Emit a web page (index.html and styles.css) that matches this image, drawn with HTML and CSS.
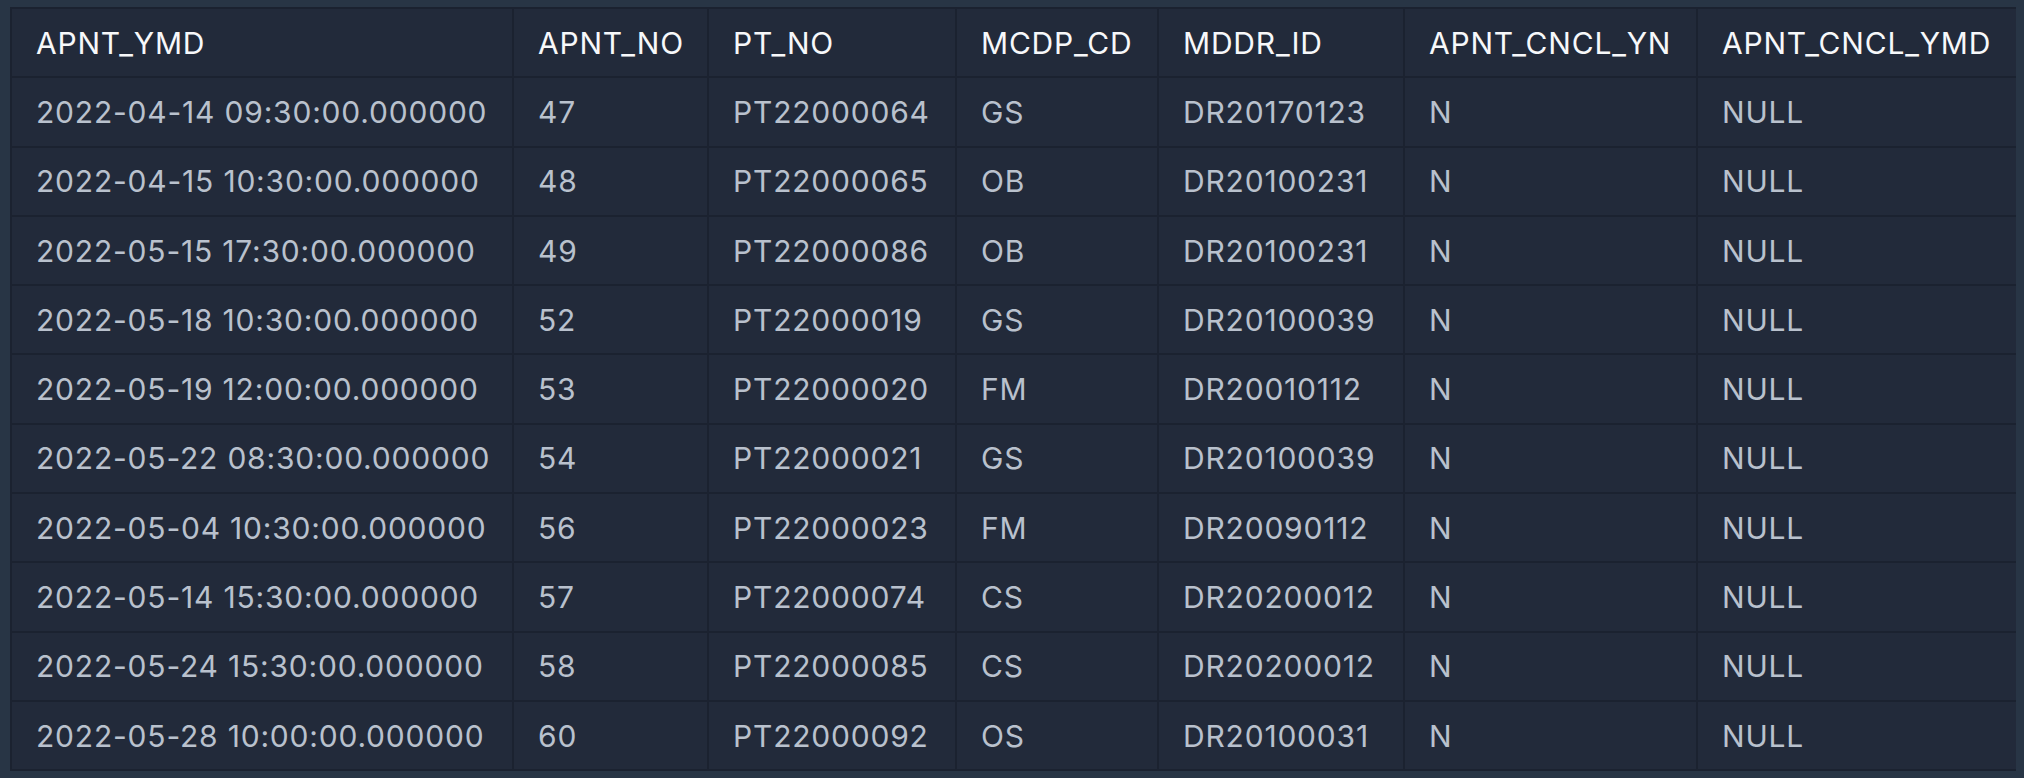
FILE: index.html
```html
<!DOCTYPE html>
<html>
<head>
<meta charset="utf-8">
<link rel="stylesheet" href="styles.css">
</head>
<body>
<table class="grid">
  <colgroup>
    <col class="c1"><col class="c2"><col class="c3"><col class="c4"><col class="c5"><col class="c6"><col class="c7">
  </colgroup>
  <thead>
    <tr><th>APNT_YMD</th><th>APNT_NO</th><th>PT_NO</th><th>MCDP_CD</th><th>MDDR_ID</th><th>APNT_CNCL_YN</th><th>APNT_CNCL_YMD</th></tr>
  </thead>
  <tbody>
    <tr><td>2022-04-14 09:30:00.000000</td><td>47</td><td>PT22000064</td><td>GS</td><td>DR20170123</td><td>N</td><td>NULL</td></tr>
    <tr><td>2022-04-15 10:30:00.000000</td><td>48</td><td>PT22000065</td><td>OB</td><td>DR20100231</td><td>N</td><td>NULL</td></tr>
    <tr><td>2022-05-15 17:30:00.000000</td><td>49</td><td>PT22000086</td><td>OB</td><td>DR20100231</td><td>N</td><td>NULL</td></tr>
    <tr><td>2022-05-18 10:30:00.000000</td><td>52</td><td>PT22000019</td><td>GS</td><td>DR20100039</td><td>N</td><td>NULL</td></tr>
    <tr><td>2022-05-19 12:00:00.000000</td><td>53</td><td>PT22000020</td><td>FM</td><td>DR20010112</td><td>N</td><td>NULL</td></tr>
    <tr><td>2022-05-22 08:30:00.000000</td><td>54</td><td>PT22000021</td><td>GS</td><td>DR20100039</td><td>N</td><td>NULL</td></tr>
    <tr><td>2022-05-04 10:30:00.000000</td><td>56</td><td>PT22000023</td><td>FM</td><td>DR20090112</td><td>N</td><td>NULL</td></tr>
    <tr><td>2022-05-14 15:30:00.000000</td><td>57</td><td>PT22000074</td><td>CS</td><td>DR20200012</td><td>N</td><td>NULL</td></tr>
    <tr><td>2022-05-24 15:30:00.000000</td><td>58</td><td>PT22000085</td><td>CS</td><td>DR20200012</td><td>N</td><td>NULL</td></tr>
    <tr><td>2022-05-28 10:00:00.000000</td><td>60</td><td>PT22000092</td><td>OS</td><td>DR20100031</td><td>N</td><td>NULL</td></tr>
  </tbody>
</table>
</body>
</html>
```

FILE: styles.css
```css
html, body {
  background: #283545;
}
body {
  margin: 7px 8px 8px 10px;
  font-family: Inter, "Noto Sans", "Liberation Sans", sans-serif;
}
.grid {
  width: 2006px;
  table-layout: fixed;
  border-collapse: collapse;
  background: #222a3a;
  border: 2px solid #1b2230;
}
.c1 { width: 502px; }
.c2 { width: 195px; }
.c3 { width: 248px; }
.c4 { width: 202px; }
.c5 { width: 246px; }
.c6 { width: 293px; }
.c7 { width: 320px; }
.grid th, .grid td {
  border: 2px solid #1b2230;
  height: 69.3px;
  padding: 0 0 0 24px;
  box-sizing: border-box;
  text-align: left;
  font-size: 30px;
  font-weight: 400;
  letter-spacing: 0.8px;
  white-space: nowrap;
  overflow: hidden;
}
.grid th {
  color: #f7f8fa;
}
.grid td {
  color: #b9c1cd;
}
```
